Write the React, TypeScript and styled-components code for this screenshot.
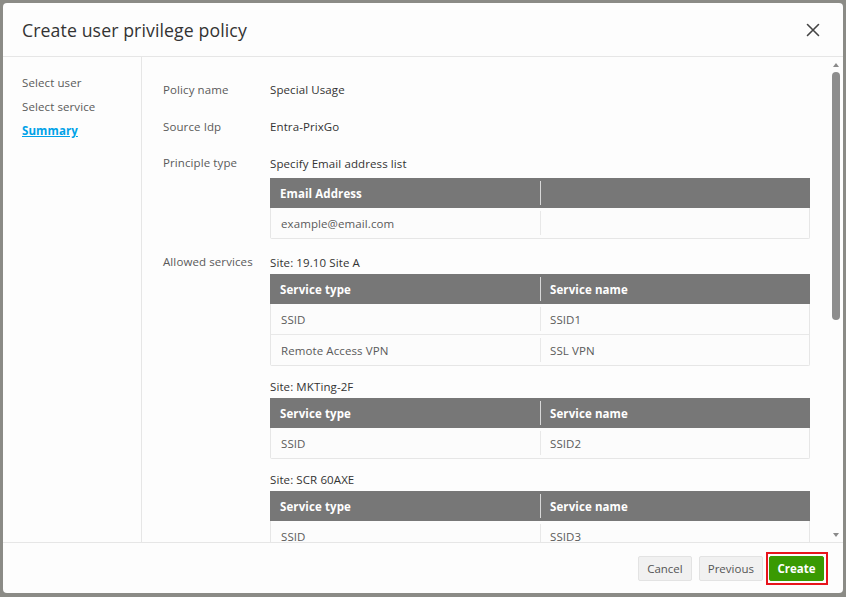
import styled, { createGlobalStyle } from 'styled-components';

type TableProps = {
	headers: string[];
	rows: string[][];
};

const GlobalStyle = createGlobalStyle`
	html, body {
		margin: 0;
		padding: 0;
	}
	body {
		background: #8b8b86;
		font-family: 'Open Sans', 'Liberation Sans', sans-serif;
		color: #333;
	}
	* {
		box-sizing: border-box;
	}
`;

const Page = styled.div`
	width: 846px;
	height: 597px;
	padding: 3px 3px 4px 3px;
`;

const Modal = styled.div`
	width: 840px;
	height: 590px;
	background: #fdfdfd;
	border-radius: 4px;
	display: flex;
	flex-direction: column;
	overflow: hidden;
`;

const Header = styled.div`
	height: 54px;
	flex-shrink: 0;
	display: flex;
	align-items: center;
	justify-content: space-between;
	padding: 0 22px 0 19px;
	border-bottom: 1px solid #e6e6e6;
`;

const Title = styled.h1`
	margin: 0;
	font-size: 17.7px;
	font-weight: 500;
	color: #333;
	letter-spacing: 0.1px;
`;

const CloseButton = styled.button`
	border: none;
	background: none;
	padding: 0;
	width: 16px;
	height: 16px;
	display: flex;
	align-items: center;
	justify-content: center;
	cursor: pointer;
`;

const Body = styled.div`
	flex: 1;
	min-height: 0;
	display: flex;
`;

const Nav = styled.nav`
	width: 139px;
	flex-shrink: 0;
	border-right: 1px solid #e6e6e6;
	padding: 14px 0 0 19px;
	display: flex;
	flex-direction: column;
`;

const NavItem = styled.a<{ $active?: boolean }>`
	font-size: 11.5px;
	letter-spacing: 0.1px;
	line-height: 24px;
	color: ${(p) => (p.$active ? '#00a2e8' : '#5a5a5a')};
	font-weight: ${(p) => (p.$active ? 700 : 400)};
	text-decoration: ${(p) => (p.$active ? 'underline' : 'none')};
`;

const Content = styled.div`
	flex: 1;
	position: relative;
	overflow: hidden;
	padding: 25px 33px 0 21px;
`;

const Field = styled.div<{ $gap: number }>`
	display: grid;
	grid-template-columns: 107px 1fr;
	margin-bottom: ${(p) => p.$gap}px;
`;

const Label = styled.div`
	font-size: 11.5px;
	letter-spacing: 0.1px;
	line-height: 16px;
	color: #5a5a5a;
`;

const Value = styled.div`
	font-size: 11.5px;
	letter-spacing: 0.1px;
	line-height: 16px;
	color: #333;
`;

const ValueBlock = styled.div`
	display: flex;
	flex-direction: column;
`;

const SubTitle = styled.div<{ $gap: number }>`
	font-size: 11.5px;
	letter-spacing: 0.1px;
	line-height: 16px;
	padding-top: 1px;
	color: #333;
	margin-bottom: ${(p) => p.$gap}px;
`;

const SiteList = styled.div`
	display: flex;
	flex-direction: column;
	gap: 12px;
`;

const Table = styled.div`
	border: 1px solid #e6e6e6;
	border-top: none;
	border-radius: 2px;
`;

const Row = styled.div<{ $head?: boolean }>`
	display: grid;
	grid-template-columns: 1fr 1fr;
	height: ${(p) => (p.$head ? 30 : 31)}px;
	background: ${(p) => (p.$head ? '#777777' : '#fcfcfc')};
	border-bottom: ${(p) => (p.$head ? 'none' : '1px solid #e8e8e8')};
	margin: ${(p) => (p.$head ? '0 -1px' : '0')};

	&:last-child {
		border-bottom: none;
		height: 30px;
	}
`;

const Cell = styled.div<{ $head?: boolean }>`
	display: flex;
	align-items: center;
	padding-left: 10px;
	font-size: 11.5px;
	letter-spacing: 0.1px;
	font-weight: ${(p) => (p.$head ? 700 : 400)};
	color: ${(p) => (p.$head ? '#ffffff' : '#5a5a5a')};
	position: relative;

	& + &::before {
		content: '';
		position: absolute;
		left: 0;
		top: 3px;
		bottom: 3px;
		width: 1px;
		background: ${(p) => (p.$head ? '#d8d8d8' : '#e8e8e8')};
	}
`;

const ScrollTrack = styled.div`
	position: absolute;
	top: 0;
	right: 3px;
	bottom: 0;
	width: 8px;
`;

const ScrollArrow = styled.div<{ $down?: boolean }>`
	position: absolute;
	left: 1px;
	${(p) => (p.$down ? 'bottom: 5px;' : 'top: 6px;')}
	width: 0;
	height: 0;
	border-left: 3px solid transparent;
	border-right: 3px solid transparent;
	${(p) => (p.$down ? 'border-top: 4px solid #8a8a8a;' : 'border-bottom: 4px solid #8a8a8a;')}
`;

const ScrollThumb = styled.div`
	position: absolute;
	top: 15px;
	left: 0;
	width: 8px;
	height: 248px;
	border-radius: 4px;
	background: #8d8d8d;
`;

const Footer = styled.div`
	height: 51px;
	flex-shrink: 0;
	border-top: 1px solid #e6e6e6;
	display: flex;
	align-items: center;
	justify-content: flex-end;
	gap: 7px;
	padding-right: 15px;
`;

const Button = styled.button<{ $primary?: boolean }>`
	height: 25px;
	padding: 0 ${(p) => (p.$primary ? 7.5 : 8)}px;
	border-radius: 2px;
	border: 1px solid ${(p) => (p.$primary ? '#3a9a02' : '#e3e3e3')};
	background: ${(p) => (p.$primary ? '#3a9a02' : '#f1f1f1')};
	color: ${(p) => (p.$primary ? '#ffffff' : '#555')};
	font-family: 'Open Sans', 'Liberation Sans', sans-serif;
	font-size: 11.5px;
	font-weight: ${(p) => (p.$primary ? 700 : 500)};
	cursor: pointer;
`;

const Highlight = styled.div`
	padding: 2px 2px 2px 1px;
	border: 2px solid #e8141c;
	margin-left: -4px;
`;

const DataTable = ({ headers, rows }: TableProps) => (
	<Table>
		<Row $head>
			{headers.map((h, i) => (
				<Cell $head key={i}>
					{h}
				</Cell>
			))}
		</Row>
		{rows.map((r, i) => (
			<Row key={i}>
				{r.map((c, j) => (
					<Cell key={j}>{c}</Cell>
				))}
			</Row>
		))}
	</Table>
);

const sites = [
	{
		name: 'Site: 19.10 Site A',
		rows: [
			['SSID', 'SSID1'],
			['Remote Access VPN', 'SSL VPN']
		]
	},
	{ name: 'Site: MKTing-2F', rows: [['SSID', 'SSID2']] },
	{ name: 'Site: SCR 60AXE', rows: [['SSID', 'SSID3']] }
];

const App = () => {
	return (
		<>
			<GlobalStyle />
			<Page>
				<Modal>
					<Header>
						<Title>Create user privilege policy</Title>
						<CloseButton aria-label="Close">
							<svg width="14" height="14" viewBox="0 0 14 14">
								<path
									d="M1.5 1.5 L12.5 12.5 M12.5 1.5 L1.5 12.5"
									stroke="#444"
									strokeWidth="1.6"
									strokeLinecap="round"
								/>
							</svg>
						</CloseButton>
					</Header>
					<Body>
						<Nav>
							<NavItem>Select user</NavItem>
							<NavItem>Select service</NavItem>
							<NavItem $active>Summary</NavItem>
						</Nav>
						<Content>
							<Field $gap={21}>
								<Label>Policy name</Label>
								<Value>Special Usage</Value>
							</Field>
							<Field $gap={20}>
								<Label>Source Idp</Label>
								<Value>Entra-PrixGo</Value>
							</Field>
							<Field $gap={15}>
								<Label>Principle type</Label>
								<ValueBlock>
									<SubTitle $gap={6}>Specify Email address list</SubTitle>
									<DataTable
										headers={['Email Address', '']}
										rows={[['example@email.com', '']]}
									/>
								</ValueBlock>
							</Field>
							<Field $gap={0}>
								<Label>Allowed services</Label>
								<SiteList>
									{sites.map((s) => (
										<ValueBlock key={s.name}>
											<SubTitle $gap={3}>{s.name}</SubTitle>
											<DataTable
												headers={['Service type', 'Service name']}
												rows={s.rows}
											/>
										</ValueBlock>
									))}
								</SiteList>
							</Field>
							<ScrollTrack>
								<ScrollArrow />
								<ScrollThumb />
								<ScrollArrow $down />
							</ScrollTrack>
						</Content>
					</Body>
					<Footer>
						<Button>Cancel</Button>
						<Button>Previous</Button>
						<Highlight>
							<Button $primary>Create</Button>
						</Highlight>
					</Footer>
				</Modal>
			</Page>
		</>
	);
};

export default App;
